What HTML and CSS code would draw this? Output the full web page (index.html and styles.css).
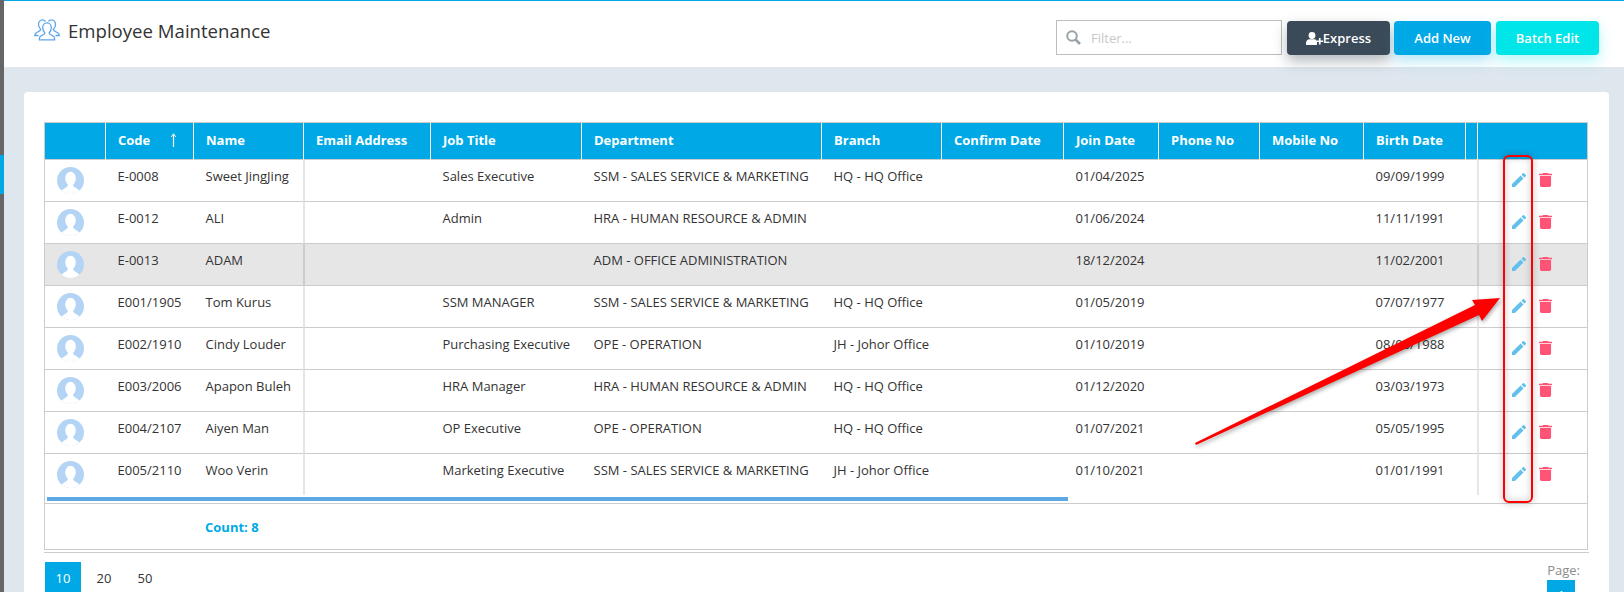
FILE: index.html
```html
<!DOCTYPE html>
<html lang="en">
<head>
<meta charset="utf-8">
<title>Employee Maintenance</title>
<link rel="stylesheet" href="styles.css">
</head>
<body>
<svg width="0" height="0" class="defs">
  <defs>
    <clipPath id="avatar-clip"><circle cx="13.5" cy="13.5" r="13.5"/></clipPath>
    <symbol id="avatar" viewBox="0 0 27 27">
      <g clip-path="url(#avatar-clip)">
        <rect width="27" height="27" fill="#b3d4f5"/>
        <ellipse cx="13.5" cy="11.5" rx="5.300" ry="6.800" fill="#fff"/>
        <path d="M11 16.500 C11 19 10 20 8 21 L3 24.500 L3 27 L24 27 L24 24.500 L19 21 C17 20 16 19 16 16.500 Z" fill="#fff"/>
      </g>
    </symbol>
    <symbol id="edit" viewBox="3 3 18 18"><path fill="#62c0ec" d="M3 17.250V21h3.750L17.810 9.940l-3.750-3.750L3 17.250zM20.710 7.040c.39-.39.39-1.020 0-1.410l-2.340-2.340c-.39-.39-1.020-.39-1.410 0l-1.830 1.830 3.750 3.750 1.830-1.830z"/></symbol>
    <symbol id="trash" viewBox="5 3 14 18" preserveAspectRatio="none"><path fill="#ff5476" d="M6 19c0 1.100.9 2 2 2h8c1.100 0 2-.9 2-2V7H6v12zM19 4h-3.500l-1-1h-5l-1 1H5v2h14V4z"/></symbol>
  </defs>
</svg>

<div class="app">
  <aside class="strip"><div class="strip-top"></div><div class="strip-active"></div></aside>
  <main class="main">
    <header class="topbar">
      <div class="title-wrap">
        <svg class="title-icon" viewBox="0 0 26 22" width="26" height="22" fill="none" stroke="#5ea6ea" stroke-width="1.300">
          <path d="M11.500 2.500C10.700 1.400 9.700 .8 8.500 .8 6 .8 4.500 3 4.500 5.500c0 2 1 3.700 2.200 4.800-.2 1.300-1.500 2-3 2.700C2 13.800.8 15 .8 16.500h3.700"/>
          <path d="M14.500 2.500C15.300 1.400 16.300 .8 17.500 .8 20 .8 21.500 3 21.500 5.500c0 2-1 3.700-2.200 4.800.2 1.300 1.500 2 3 2.700 1.700.8 2.900 2 2.900 3.500h-3.700"/>
          <path d="M8.700 8.500c0-2.800 1.900-4.700 4.300-4.700s4.300 1.900 4.300 4.700c0 2.500-1 4.400-2.200 5.400 0 1.200 1.500 1.800 3 2.500 1.500.7 2.500 1.500 2.500 2.800v1.600H5.400v-1.600c0-1.300 1-2.100 2.500-2.800 1.500-.7 3-1.300 3-2.500-1.200-1-2.200-2.900-2.200-5.400z"/>
        </svg>
        <h1 class="title">Employee Maintenance</h1>
      </div>
      <div class="actions">
        <label class="filter">
          <svg class="search-icon" viewBox="0 0 15 15" width="15" height="15" fill="none" stroke="#9ca3a8"><circle cx="6" cy="6" r="4.800" stroke-width="2"/><path d="M9.500 9.500L14 14" stroke-width="2.600"/></svg>
          <input class="filter-input" type="text" placeholder="Filter...">
        </label>
        <button class="btn btn-dark" type="button">
          <svg viewBox="0 0 17 13" width="17" height="13" fill="#fff"><circle cx="6" cy="3.500" r="3.400"/><path d="M0 13v-2c0-2.500 1.800-3.800 3.500-3.800h5C10.200 7.200 11 8.500 11 10v3z"/><path d="M10.500 8.400h2.400V6h1.700v2.400H17v1.700h-2.400v2.400h-1.700v-2.400h-2.400z"/></svg><span>Express</span>
        </button>
        <button class="btn btn-blue" type="button">Add New</button>
        <button class="btn btn-cyan" type="button">Batch Edit</button>
      </div>
    </header>

    <section class="content">
      <div class="card">
        <div class="grid-box">
          <table class="grid">
            <colgroup>
              <col class="c-av"><col class="c-code"><col class="c-name"><col class="c-mail"><col class="c-job"><col class="c-dept"><col class="c-branch"><col class="c-date"><col class="c-join"><col class="c-phone"><col class="c-mobile"><col class="c-birth"><col class="c-gap"><col class="c-act">
            </colgroup>
            <thead>
              <tr>
                <th></th>
                <th><div class="sort-head"><span>Code</span><svg viewBox="0 0 7 14" width="7" height="14" fill="none" stroke="#fff"><path d="M3.500 14V1.500" stroke-width="1.200"/><path d="M1.200 4L3.500 .8 5.800 4" stroke-width="1"/></svg></div></th>
                <th>Name</th><th>Email Address</th><th>Job Title</th><th>Department</th><th>Branch</th><th>Confirm Date</th><th>Join Date</th><th>Phone No</th><th>Mobile No</th><th>Birth Date</th><th></th><th></th>
              </tr>
            </thead>
            <tbody>
              <tr>
                <td class="av-cell"><svg class="av"><use href="#avatar"/></svg></td><td>E-0008</td><td>Sweet JingJing</td><td class="frozen"></td><td>Sales Executive</td><td>SSM - SALES SERVICE &amp; MARKETING</td><td>HQ - HQ Office</td><td></td><td>01/04/2025</td><td></td><td></td><td>09/09/1999</td><td></td>
                <td class="frozen"><div class="row-acts"><svg class="i-edit"><use href="#edit"/></svg><svg class="i-trash"><use href="#trash"/></svg></div></td>
              </tr>
              <tr>
                <td class="av-cell"><svg class="av"><use href="#avatar"/></svg></td><td>E-0012</td><td>ALI</td><td class="frozen"></td><td>Admin</td><td>HRA - HUMAN RESOURCE &amp; ADMIN</td><td></td><td></td><td>01/06/2024</td><td></td><td></td><td>11/11/1991</td><td></td>
                <td class="frozen"><div class="row-acts"><svg class="i-edit"><use href="#edit"/></svg><svg class="i-trash"><use href="#trash"/></svg></div></td>
              </tr>
              <tr class="selected">
                <td class="av-cell"><svg class="av"><use href="#avatar"/></svg></td><td>E-0013</td><td>ADAM</td><td class="frozen"></td><td></td><td>ADM - OFFICE ADMINISTRATION</td><td></td><td></td><td>18/12/2024</td><td></td><td></td><td>11/02/2001</td><td></td>
                <td class="frozen"><div class="row-acts"><svg class="i-edit"><use href="#edit"/></svg><svg class="i-trash"><use href="#trash"/></svg></div></td>
              </tr>
              <tr>
                <td class="av-cell"><svg class="av"><use href="#avatar"/></svg></td><td>E001/1905</td><td>Tom Kurus</td><td class="frozen"></td><td>SSM MANAGER</td><td>SSM - SALES SERVICE &amp; MARKETING</td><td>HQ - HQ Office</td><td></td><td>01/05/2019</td><td></td><td></td><td>07/07/1977</td><td></td>
                <td class="frozen"><div class="row-acts"><svg class="i-edit"><use href="#edit"/></svg><svg class="i-trash"><use href="#trash"/></svg></div></td>
              </tr>
              <tr>
                <td class="av-cell"><svg class="av"><use href="#avatar"/></svg></td><td>E002/1910</td><td>Cindy Louder</td><td class="frozen"></td><td>Purchasing Executive</td><td>OPE - OPERATION</td><td>JH - Johor Office</td><td></td><td>01/10/2019</td><td></td><td></td><td>08/08/1988</td><td></td>
                <td class="frozen"><div class="row-acts"><svg class="i-edit"><use href="#edit"/></svg><svg class="i-trash"><use href="#trash"/></svg></div></td>
              </tr>
              <tr>
                <td class="av-cell"><svg class="av"><use href="#avatar"/></svg></td><td>E003/2006</td><td>Apapon Buleh</td><td class="frozen"></td><td>HRA Manager</td><td>HRA - HUMAN RESOURCE &amp; ADMIN</td><td>HQ - HQ Office</td><td></td><td>01/12/2020</td><td></td><td></td><td>03/03/1973</td><td></td>
                <td class="frozen"><div class="row-acts"><svg class="i-edit"><use href="#edit"/></svg><svg class="i-trash"><use href="#trash"/></svg></div></td>
              </tr>
              <tr>
                <td class="av-cell"><svg class="av"><use href="#avatar"/></svg></td><td>E004/2107</td><td>Aiyen Man</td><td class="frozen"></td><td>OP Executive</td><td>OPE - OPERATION</td><td>HQ - HQ Office</td><td></td><td>01/07/2021</td><td></td><td></td><td>05/05/1995</td><td></td>
                <td class="frozen"><div class="row-acts"><svg class="i-edit"><use href="#edit"/></svg><svg class="i-trash"><use href="#trash"/></svg></div></td>
              </tr>
              <tr>
                <td class="av-cell"><svg class="av"><use href="#avatar"/></svg></td><td>E005/2110</td><td>Woo Verin</td><td class="frozen"></td><td>Marketing Executive</td><td>SSM - SALES SERVICE &amp; MARKETING</td><td>JH - Johor Office</td><td></td><td>01/10/2021</td><td></td><td></td><td>01/01/1991</td><td></td>
                <td class="frozen"><div class="row-acts"><svg class="i-edit"><use href="#edit"/></svg><svg class="i-trash"><use href="#trash"/></svg></div></td>
              </tr>
            </tbody>
          </table>
          <div class="scroll-track"><div class="scroll-thumb"></div></div>
          <div class="summary"><span class="count">Count: 8</span></div>
        </div>
        <div class="pager-row">
          <div class="sizes">
            <span class="size size-on">10</span><span class="size">20</span><span class="size">50</span>
          </div>
          <div class="pager">
            <span class="page-label">Page:</span>
            <span class="page-no">1</span>
          </div>
        </div>
      </div>
    </section>
  </main>
</div>

<svg class="annotation" viewBox="0 0 1624 592" width="1624" height="592">
  <rect class="anno-glow" x="1504" y="156" width="28" height="346" rx="5"/>
  <rect class="anno-box" x="1504" y="156" width="28" height="346" rx="5"/>
  <polygon class="anno-arrow" points="1195,443 1475,305 1472,300 1500,298 1482,321 1479,315 1196,445"/>
</svg>
</body>
</html>
```

FILE: styles.css
```css
* { box-sizing: border-box; }
html, body { margin: 0; height: 592px; overflow: hidden; }
body { font-family: "Open Sans", "Liberation Sans", sans-serif; font-size: 13px; color: #333; background: #dee6ee; position: relative; }
.defs { position: absolute; }
.app { display: flex; width: 1624px; height: 592px; }
.strip { width: 4px; background: #666; flex: none; }
.strip-top { height: 155px; }
.strip-active { height: 39px; background: #00a9e6; }
.main { flex: 1; min-width: 0; display: flex; flex-direction: column; }

.topbar { height: 68px; flex: none; background: #fff; border-top: 1px solid #00a9e6; border-bottom: 1px solid #e3e7eb; display: flex; justify-content: space-between; padding: 0 25px 0 30px; }
.title-wrap { display: flex; align-items: flex-start; gap: 8px; padding-top: 18px; }
.title { margin: -1px 0 0; font-size: 18.6px; font-weight: 400; line-height: 26px; color: #333; }
.actions { display: flex; align-items: flex-start; padding-top: 19px; }
.filter { display: flex; align-items: center; width: 226px; height: 35px; border: 1px solid #bdbdbd; padding-left: 9px; gap: 10px; background: #fff; margin-right: 5px; }
.search-icon { flex: none; }
.filter-input { border: 0; outline: 0; flex: 1; min-width: 0; font: 13px "Open Sans", sans-serif; padding: 0; color: #333; }
.filter-input::placeholder { color: #c8c8c8; opacity: 1; }
.btn { height: 34px; border: 0; border-radius: 4px; color: #fff; font: 600 13px "Open Sans", sans-serif; display: flex; align-items: center; justify-content: center; padding: 0; margin-right: 4px; }
.btn-dark { width: 103px; background: #3b4a58; box-shadow: 0 6px 14px rgba(59, 74, 88, .4); margin-top: 1px; }
.btn-blue { width: 97px; background: #00a9e6; box-shadow: 0 6px 14px rgba(0, 169, 230, .3); margin-top: 1px; }
.btn-cyan { width: 103px; background: #00e5e8; box-shadow: 0 6px 14px rgba(0, 229, 232, .3); margin: 1px 0 0 1px; }

.content { flex: 1; min-height: 0; padding: 24px 15px 0 20px; }
.card { background: #fff; border-radius: 4px 4px 0 0; height: 600px; padding: 30px 21px 0 20px; }
.grid-box { width: 1544px; border: 1px solid #ccc; height: 428px; }
.grid { table-layout: fixed; border-collapse: separate; border-spacing: 0; width: 1542px; }
.c-av { width: 60px; } .c-code { width: 88px; } .c-name { width: 110px; } .c-mail { width: 127px; } .c-job { width: 151px; }
.c-dept { width: 240px; } .c-branch { width: 120px; } .c-date { width: 122px; } .c-join { width: 95px; } .c-phone { width: 101px; }
.c-mobile { width: 104px; } .c-birth { width: 102px; } .c-gap { width: 12px; } .c-act { width: 110px; }
.grid th { height: 37px; background: #00a9e6; color: #fff; font-size: 13px; font-weight: 700; text-align: left; padding: 0 0 2px 12px; border-left: 1px solid #fff; border-bottom: 1px solid #ccc; white-space: nowrap; }
.grid th:first-child { border-left: 0; }
.sort-head { display: flex; align-items: center; gap: 20px; }
.grid td { height: 42px; padding: 7px 0 0 12.5px; line-height: 18px; vertical-align: top; border-bottom: 1px solid #ccc; white-space: nowrap; color: #333; }
.grid tbody tr:last-child td { border-bottom: 0; height: 41px; }
.grid .av-cell { padding: 7px 0 0 12px; }
.av { display: block; width: 27px; height: 27px; }
.grid td.frozen { border-left: 2px solid #e6e6e6; }
.selected td { background: #e6e6e6; }
.grid .selected td.frozen { border-left-color: #ccc; }
.row-acts { display: flex; align-items: flex-start; gap: 13px; padding: 6px 0 0 20.5px; }
.i-edit { width: 14px; height: 14px; flex: none; }
.i-trash { width: 13px; height: 14px; flex: none; }

.scroll-track { height: 8px; padding: 2px 0 2px 2px; }
.scroll-thumb { width: 1021px; height: 4px; background: #5ea8e6; }
.summary { border-top: 1px solid #ccc; height: 45px; padding: 14px 0 0 160px; }
.count { color: #00a9e6; font-weight: 700; font-size: 13px; }

.pager-row { display: flex; justify-content: space-between; border-top: 1px solid #ccc; margin-top: 2px; width: 1545px; padding: 9px 9px 0 1px; }
.sizes { display: flex; gap: 5px; }
.size { width: 36px; height: 32px; display: flex; align-items: center; justify-content: center; color: #333; }
.size-on { background: #00a9e6; color: #fff; }
.pager { display: flex; flex-direction: column; align-items: flex-start; }
.page-label { color: #8c8c8c; line-height: 18px; margin-top: -1px; }
.page-no { width: 28px; height: 30px; margin-top: 1px; background: #00a9e6; color: #fff; display: flex; align-items: center; justify-content: center; }

.annotation { position: absolute; left: 0; top: 0; pointer-events: none; }
.anno-box { fill: none; stroke: #f00; stroke-width: 2; }
.anno-glow { fill: none; stroke: rgba(0, 0, 0, .16); stroke-width: 5; filter: blur(3px); }
.anno-arrow { fill: #f00; filter: drop-shadow(1px 2px 2px rgba(0, 0, 0, .35)); }
```
